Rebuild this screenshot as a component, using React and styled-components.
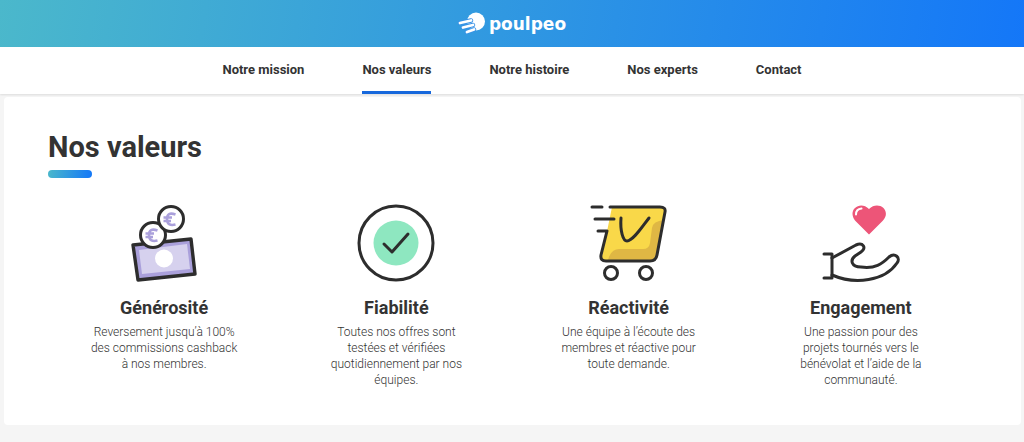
import React from "react";
import styled, { createGlobalStyle } from "styled-components";

const links = ["Notre mission", "Nos valeurs", "Notre histoire", "Nos experts", "Contact"];

const MoneyIcon = () => (
  <Icon viewBox="0 0 80 80" aria-hidden="true">
    <path d="M9 43 67 37 71 72 14 78Z" fill="#aaa0db" stroke="#2d2d2d" strokeWidth="3.4" strokeLinejoin="round" />
    <path d="M15 48 63 42 66 67 18 72Z" fill="#d6d1ee" />
    <circle cx="40" cy="56.500" r="9" fill="#fff" />
    <circle cx="29" cy="33" r="12.500" fill="#fff" stroke="#2d2d2d" strokeWidth="3" />
    <circle cx="47" cy="17" r="12.500" fill="#fff" stroke="#2d2d2d" strokeWidth="3" />
    <g fill="none" stroke="#aaa0db" strokeWidth="2.6">
      <path d="M51.500 12.500Q43 9.500 43 17T51.500 22.500M39.500 15.500h8.500M39.500 19h7.500" />
      <path d="M33.500 28.500Q25 25.500 25 33T33.500 38.500M21.500 31.500h8.500M21.500 35h7.500" />
    </g>
  </Icon>
);

const CheckIcon = () => (
  <Icon viewBox="0 0 80 80" aria-hidden="true">
    <circle cx="40" cy="41" r="37" fill="#fff" stroke="#2d2d2d" strokeWidth="3" />
    <circle cx="40" cy="41" r="22.500" fill="#8ee7c0" />
    <path d="M28 42 36 50 52 32" fill="none" stroke="#2d2d2d" strokeWidth="3" strokeLinecap="round" strokeLinejoin="round" />
  </Icon>
);

const CartIcon = () => (
  <Icon viewBox="0 0 80 80" aria-hidden="true">
    <path d="M23 5H71Q77 5 76 10L68 53Q67 59 61 59H17Q12 59 13 54Z" fill="#f9d849" />
    <path d="M75 18Q64 19 63 26L61 41Q60 47 54 47H30Q22 47 19 58H61Q67 58 68 53Z" fill="#dfb744" />
    <g fill="none" stroke="#2d2d2d" strokeWidth="3" strokeLinecap="round" strokeLinejoin="round">
      <path d="M21 5H71Q77 5 76 10L68 53Q67 59 61 59H17Q11 59 12 53L18 29H9M3 5H13M6 17H25" />
      <path d="M32 16C31 29 34 39 38 39C44 39 53 25 60 16" />
      <circle cx="22" cy="71" r="6.500" fill="#fff" />
      <circle cx="57" cy="71" r="6.500" fill="#fff" />
    </g>
  </Icon>
);

const HeartIcon = () => (
  <Icon viewBox="0 0 80 80" aria-hidden="true">
    <path d="M48 32.500 34 18.500C26 8 39-2 48 7C57-2 71 8 62 18.500Z" fill="#ed5578" />
    <path d="M35 12.500Q35 7 40.500 6.500" fill="none" stroke="#fff" strokeWidth="2" strokeLinecap="round" />
    <g fill="none" stroke="#2d2d2d" strokeWidth="3" strokeLinecap="round" strokeLinejoin="round">
      <path d="M3 52H11V76H3" />
      <path d="M11 56 35 43C42 40 46 46 40 50L34 54C29 58 30 65 40 65C54 67 61 62 68 55C74 50 80 56 76 61C64 79 34 83 11 73" />
    </g>
  </Icon>
);

const values = [
  { title: "Générosité", text: "Reversement jusqu’à 100% des commissions cashback à nos membres.", icon: MoneyIcon },
  { title: "Fiabilité", text: "Toutes nos offres sont testées et vérifiées quotidiennement par nos équipes.", icon: CheckIcon },
  { title: "Réactivité", text: "Une équipe à l’écoute des membres et réactive pour toute demande.", icon: CartIcon },
  { title: "Engagement", text: "Une passion pour des projets tournés vers le bénévolat et l’aide de la communauté.", icon: HeartIcon },
];

const App = () => {
  return (
    <>
      <GlobalStyle />
      <Header>
        <Logo href="#">
          <LogoMark viewBox="0 0 27 24" aria-hidden="true">
            <circle cx="18" cy="9.500" r="9" fill="#fff" />
            <g fill="none" strokeLinecap="round">
              <path d="M2 11 13 8.500M5 15.500 15 13M9 20 16 17.500" stroke="#3992e6" strokeWidth="4.400" />
              <path d="M2 11 13 8.500M5 15.500 15 13M9 20 16 17.500" stroke="#fff" strokeWidth="2.800" />
            </g>
          </LogoMark>
          poulpeo
        </Logo>
      </Header>
      <Nav>
        {links.map((link) => (
          <NavLink key={link} href="#" $active={link === "Nos valeurs"}>
            {link}
          </NavLink>
        ))}
      </Nav>
      <Card>
        <Title>Nos valeurs</Title>
        <Values>
          {values.map(({ title, text, icon: ValueIcon }) => (
            <Value key={title}>
              <ValueIcon />
              <ValueTitle>{title}</ValueTitle>
              <ValueText>{text}</ValueText>
            </Value>
          ))}
        </Values>
      </Card>
    </>
  );
};

export default App;

const GlobalStyle = createGlobalStyle`
  * {
    box-sizing: border-box;
  }

  body {
    margin: 0;
    background-color: #f5f5f5;
    color: #333;
    font-family: Roboto, "Liberation Sans", sans-serif;
  }
`;

const Header = styled.header`
  display: flex;
  justify-content: center;
  align-items: center;
  height: 47px;
  background: linear-gradient(100deg, #4bb8cb, #1477f8);
`;

const Logo = styled.a`
  display: flex;
  align-items: center;
  gap: 4px;
  color: #fff;
  font-family: "DejaVu Sans", sans-serif;
  font-size: 17px;
  font-weight: bold;
  line-height: 24px;
  text-decoration: none;
`;

const LogoMark = styled.svg`
  width: 27px;
  height: 24px;
`;

const Nav = styled.nav`
  display: flex;
  justify-content: center;
  gap: 58px;
  background-color: #fff;
  box-shadow: 0 1px 2px rgba(0, 0, 0, 0.1);
  position: relative;
`;

const NavLink = styled.a`
  padding: 13px 0 11px;
  border-bottom: 3px solid ${({ $active }) => ($active ? "#1768dc" : "transparent")};
  color: #333;
  font-size: 13px;
  font-weight: bold;
  line-height: 20px;
  text-decoration: none;
`;

const Card = styled.main`
  margin: 3px 3px 16px 4px;
  padding: 32px 44px 37px;
  border-radius: 4px;
  background-color: #fff;
`;

const Title = styled.h1`
  margin: 0 0 24px;
  font-size: 29px;
  line-height: 36px;

  &::after {
    content: "";
    display: block;
    width: 44px;
    height: 8px;
    margin-top: 5px;
    border-radius: 4px;
    background: linear-gradient(100deg, #4bb8cb, #1477f8);
  }
`;

const Values = styled.section`
  display: grid;
  grid-template-columns: repeat(4, 1fr);

  @media (max-width: 768px) {
    grid-template-columns: repeat(2, 1fr);
  }
`;

const Value = styled.article`
  display: flex;
  flex-direction: column;
  align-items: center;
  text-align: center;
`;

const Icon = styled.svg`
  width: 80px;
  height: 80px;
`;

const ValueTitle = styled.h2`
  margin: 14px 0 4px;
  font-size: 18px;
  line-height: 24px;
`;

const ValueText = styled.p`
  max-width: 150px;
  margin: 0;
  font-size: 12px;
  font-weight: 300;
  line-height: 16px;
`;
